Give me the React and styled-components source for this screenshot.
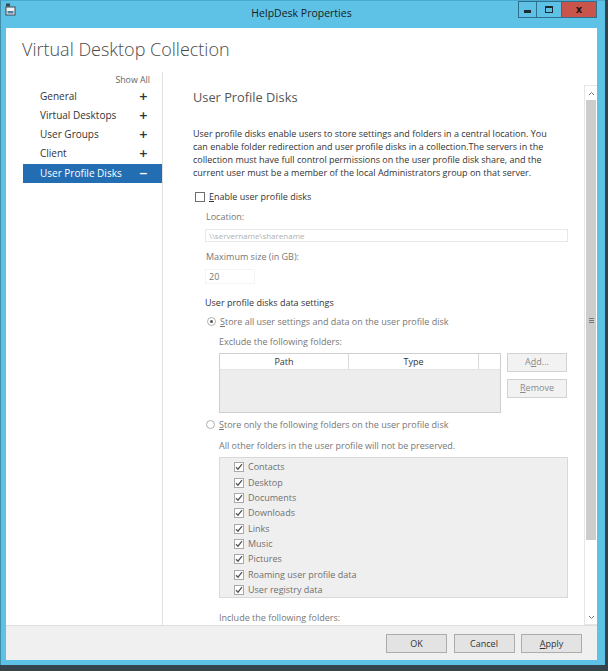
import React from 'react';
import styled, { createGlobalStyle } from 'styled-components';

const GlobalStyle = createGlobalStyle`
  html, body { margin: 0; padding: 0; background: #34434c; }
  body { font-family: "Open Sans", "Noto Sans", sans-serif; color: #333; }
  * { box-sizing: border-box; }
`;

const Shadow = styled.div`
  width: 608px;
  height: 671px;
  background: #34434c;
  padding: 0 3px 6px 0;
`;

const Frame = styled.div`
  height: 100%;
  background: #5ec2e6;
  border-left: 1px solid #3f8cab;
  border-top: 1px solid #4aa9cf;
  display: flex;
  flex-direction: column;
  padding: 0 8px 5px 5px;
`;

const TitleBar = styled.div`
  height: 27px;
  flex: none;
  display: grid;
  grid-template-columns: 1fr auto 1fr;
  align-items: start;
`;

const AppIcon = styled.svg`
  margin: 2px 0 0 -1px;
  display: block;
`;

const TitleText = styled.div`
  font-size: 10.5px;
  line-height: 24px;
  color: #1b1b1b;
`;

const Controls = styled.div`
  justify-self: end;
  display: flex;
  height: 17px;
`;

const CtrlButton = styled.div`
  width: ${p => p.$w}px;
  height: 17px;
  border: 1px solid #2f6f8d;
  border-left-width: ${p => (p.$first ? 1 : 0)}px;
  background: ${p => (p.$close ? '#c9544b' : '#5ec2e6')};
  display: flex;
  align-items: center;
  justify-content: center;
`;

const MinGlyph = styled.div`
  width: 7px;
  height: 3px;
  margin-top: 3px;
  background: #1e2a30;
`;

const MaxGlyph = styled.div`
  width: 8px;
  height: 7px;
  border: 1px solid #1e2a30;
  border-top-width: 2px;
`;

const CloseGlyph = styled.div`
  font-size: 10px;
  font-weight: 700;
  line-height: 10px;
  color: #2a1512;
  font-family: "DejaVu Sans", sans-serif;
`;

const Client = styled.div`
  flex: 1;
  min-height: 0;
  display: flex;
  flex-direction: column;
  background: #fff;
  overflow: hidden;
`;

const Body = styled.div`
  flex: 1;
  min-height: 0;
  display: flex;
  flex-direction: column;
  overflow: hidden;
`;

const PageTitle = styled.h1`
  margin: 0;
  height: 44px;
  flex: none;
  padding: 8px 0 0 16px;
  font-size: 18px;
  line-height: 26px;
  font-weight: 300;
  color: #4a4a4a;
`;

const Columns = styled.div`
  flex: 1;
  min-height: 0;
  display: flex;
`;

const Nav = styled.div`
  width: 157px;
  flex: none;
  padding-left: 17px;
  border-right: 1px solid #e2e2e2;
`;

const ShowAll = styled.div`
  height: 14.5px;
  line-height: 16px;
  text-align: right;
  padding-right: 12px;
  font-size: 8.8px;
  color: #666;
`;

const NavItem = styled.div`
  height: 19.25px;
  line-height: 19.25px;
  display: flex;
  justify-content: space-between;
  padding: 0 14px 0 17px;
  font-size: 10px;
  color: ${p => (p.$active ? '#fff' : '#333')};
  background: ${p => (p.$active ? '#236db3' : 'transparent')};
`;

const NavSign = styled.span`
  font-weight: 700;
  font-size: 11px;
  font-family: "DejaVu Sans", sans-serif;
`;

const Main = styled.div`
  flex: 1;
  min-width: 0;
  display: flex;
`;

const Content = styled.div`
  flex: 1;
  min-width: 0;
  padding: 0 16px 0 30px;
  font-size: 9px;
  line-height: 14px;
`;

const SectionTitle = styled.h2`
  margin: 16px 0 0;
  font-size: 12.8px;
  line-height: 18px;
  font-weight: 400;
  color: #555;
`;

const Para = styled.p`
  margin: 20.5px 0 0;
  line-height: 13px;
  color: #333;
  white-space: nowrap;
`;

const CheckRow = styled.label`
  display: flex;
  align-items: center;
  gap: 4px;
  height: 14px;
  margin: ${p => p.$m || '0'};
  color: ${p => (p.$dim ? '#777' : '#333')};
`;

const Box = styled.span`
  width: 10px;
  height: 10px;
  flex: none;
  border: 1px solid ${p => (p.$dim ? '#a9a9a9' : '#6f6f6f')};
  background: #fff;
  display: flex;
  align-items: center;
  justify-content: center;
`;

const Radio = styled.span`
  width: 9px;
  height: 9px;
  flex: none;
  border-radius: 50%;
  border: 1px solid #b0b0b0;
  background: #fff;
  display: flex;
  align-items: center;
  justify-content: center;
  &::after {
    content: '';
    width: 3px;
    height: 3px;
    border-radius: 50%;
    background: ${p => (p.$on ? '#555' : 'transparent')};
  }
`;

const Label = styled.div`
  height: 14px;
  margin: ${p => p.$m};
  padding-left: ${p => p.$indent || 0}px;
  color: ${p => (p.$dark ? '#333' : '#777')};
`;

const TextInput = styled.div`
  height: ${p => p.$h || 13}px;
  width: ${p => p.$w || 'auto'};
  margin: ${p => p.$m};
  margin-left: 12px;
  border: 1px solid ${p => (p.$faint ? '#f4f4f4' : '#e8e8e8')};
  padding-left: 3px;
  line-height: ${p => (p.$h || 13) - 2}px;
  font-size: ${p => p.$fs || 8}px;
  color: ${p => p.$fg || '#b0b0b0'};
`;

const ExcludeRow = styled.div`
  display: flex;
  align-items: flex-start;
  gap: 6px;
  margin-top: 4px;
  padding-left: 26px;
`;

const Table = styled.div`
  width: 282px;
  height: 60px;
  border: 1px solid #cfcfcf;
  background: #ededed;
  display: flex;
  flex-direction: column;
`;

const TableHead = styled.div`
  height: 16.5px;
  background: #fff;
  display: grid;
  grid-template-columns: 129px 130px 1fr;
  border-bottom: 1px solid #e4e4e4;
`;

const HeadCell = styled.div`
  text-align: center;
  line-height: 15px;
  color: #333;
  border-right: ${p => (p.$last ? 'none' : '1px solid #dadada')};
`;

const SideButtons = styled.div`
  display: flex;
  flex-direction: column;
  gap: 7px;
`;

const Btn = styled.div`
  width: ${p => p.$w || 61}px;
  height: ${p => p.$h || 19}px;
  border: 1px solid ${p => (p.$dim ? '#d2d2d2' : '#acacac')};
  background: ${p => (p.$dim ? '#f2f2f2' : '#e3e3e3')};
  color: ${p => (p.$dim ? '#8a8a8a' : '#333')};
  display: flex;
  align-items: center;
  justify-content: center;
  font-size: ${p => p.$fs || 9}px;
`;

const U = styled.span`
  text-decoration: underline;
`;

const CheckList = styled.div`
  margin: 4.6px 0 0 26px;
  height: 141px;
  border: 1px solid #d9d9d9;
  background: #efefef;
  padding: 1.5px 0 0 14px;
`;

const CheckItem = styled.div`
  height: 15.33px;
  display: flex;
  align-items: center;
  gap: 4px;
  color: #6f6f6f;
`;

const Scrollbar = styled.div`
  width: 13px;
  flex: none;
  margin-top: 13px;
  border: 1px solid #e6e6e6;
  border-right: none;
  background: #fff;
  display: flex;
  flex-direction: column;
`;

const ScrollArrow = styled.div`
  height: 14px;
  flex: none;
  display: flex;
  align-items: center;
  justify-content: center;
`;

const Thumb = styled.div`
  height: 440px;
  flex: none;
  margin: 0 1px;
  background: #cdcdcd;
  display: flex;
  align-items: center;
  justify-content: center;
`;

const Grip = styled.div`
  width: 5px;
  height: 5px;
  border-top: 1px solid #777;
  border-bottom: 1px solid #777;
  &::after {
    content: '';
    display: block;
    margin-top: 1px;
    height: 1px;
    background: #777;
  }
`;

const Track = styled.div`
  flex: 1;
`;

const Footer = styled.div`
  height: 35px;
  flex: none;
  background: #f0f0f0;
  border-top: 1px solid #dedede;
  display: flex;
  justify-content: flex-end;
  align-items: flex-start;
  gap: 6.5px;
  padding: 8px 15px 0 0;
`;

const Check = () => (
  <svg width="8" height="8" viewBox="0 0 8 8">
    <path d="M1 4.2 L3 6.2 L7 1.2" fill="none" stroke="#555" strokeWidth="1.3" />
  </svg>
);

const Chevron = ({ up }) => (
  <svg width="7" height="5" viewBox="0 0 7 5">
    <path d={up ? 'M1 4 L3.5 1.5 L6 4' : 'M1 1 L3.5 3.5 L6 1'} fill="none" stroke="#777" strokeWidth="1" />
  </svg>
);

const navItems = [
  ['General', '+'],
  ['Virtual Desktops', '+'],
  ['User Groups', '+'],
  ['Client', '+'],
  ['User Profile Disks', '−'],
];

const folders = [
  'Contacts', 'Desktop', 'Documents', 'Downloads', 'Links', 'Music', 'Pictures',
  'Roaming user profile data', 'User registry data',
];

export default function App() {
  return (
    <>
      <GlobalStyle />
      <Shadow>
        <Frame>
          <TitleBar>
            <AppIcon width="12" height="13" viewBox="0 0 12 13">
              <rect x="1" y="0.5" width="4" height="3" fill="#3a4a55" />
              <rect x="1" y="4" width="9" height="8" fill="#f2f2f2" stroke="#3a4a55" strokeWidth="1" />
              <rect x="2.5" y="8" width="6" height="2.5" fill="#4a7fa0" />
            </AppIcon>
            <TitleText>HelpDesk Properties</TitleText>
            <Controls>
              <CtrlButton $w={19} $first><MinGlyph /></CtrlButton>
              <CtrlButton $w={25}><MaxGlyph /></CtrlButton>
              <CtrlButton $w={35} $close><CloseGlyph>x</CloseGlyph></CtrlButton>
            </Controls>
          </TitleBar>
          <Client>
            <Body>
              <PageTitle>Virtual Desktop Collection</PageTitle>
              <Columns>
                <Nav>
                  <ShowAll>Show All</ShowAll>
                  {navItems.map(([t, s], i) => (
                    <NavItem key={t} $active={i === 4}>
                      <span>{t}</span>
                      <NavSign>{s}</NavSign>
                    </NavItem>
                  ))}
                </Nav>
                <Main>
                  <Content>
                    <SectionTitle>User Profile Disks</SectionTitle>
                    <Para>
                      User profile disks enable users to store settings and folders in a central location. You<br />
                      can enable folder redirection and user profile disks in a collection.The servers in the<br />
                      collection must have full control permissions on the user profile disk share, and the<br />
                      current user must be a member of the local Administrators group on that server.
                    </Para>
                    <CheckRow $m="11.5px 0 0 2px">
                      <Box />
                      <span><U>E</U>nable user profile disks</span>
                    </CheckRow>
                    <Label $m="5.7px 0 0" $indent={13}>Location:</Label>
                    <TextInput $m="5.3px 0 0">\\servername\sharename</TextInput>
                    <Label $m="7.7px 0 0" $indent={13}>Maximum size (in GB):</Label>
                    <TextInput $m="5.3px 0 0" $h={15} $w="50px" $faint $fs={9} $fg="#777">20</TextInput>
                    <Label $m="12.3px 0 0" $indent={12} $dark>User profile disks data settings</Label>
                    <CheckRow $m="4.4px 0 0 14px" $dim>
                      <Radio $on />
                      <span><U>S</U>tore all user settings and data on the user profile disk</span>
                    </CheckRow>
                    <Label $m="6px 0 0" $indent={26}>Exclude the following folders:</Label>
                    <ExcludeRow>
                      <Table>
                        <TableHead>
                          <HeadCell>Path</HeadCell>
                          <HeadCell>Type</HeadCell>
                          <HeadCell $last />
                        </TableHead>
                      </Table>
                      <SideButtons>
                        <Btn $dim $w={60}>A<U>d</U>d...</Btn>
                        <Btn $dim $w={60}><U>R</U>emove</Btn>
                      </SideButtons>
                    </ExcludeRow>
                    <CheckRow $m="5.3px 0 0 13px" $dim>
                      <Radio />
                      <span><U>S</U>tore only the following folders on the user profile disk</span>
                    </CheckRow>
                    <Label $m="6.7px 0 0" $indent={26}>All other folders in the user profile will not be preserved.</Label>
                    <CheckList>
                      {folders.map(f => (
                        <CheckItem key={f}>
                          <Box $dim><Check /></Box>
                          <span>{f}</span>
                        </CheckItem>
                      ))}
                    </CheckList>
                    <Label $m="13px 0 0" $indent={26}>Include the following folders:</Label>
                  </Content>
                  <Scrollbar>
                    <ScrollArrow><Chevron up /></ScrollArrow>
                    <Thumb><Grip /></Thumb>
                    <Track />
                    <ScrollArrow><Chevron /></ScrollArrow>
                  </Scrollbar>
                </Main>
              </Columns>
            </Body>
            <Footer>
              <Btn>OK</Btn>
              <Btn>Cancel</Btn>
              <Btn><U>A</U>pply</Btn>
            </Footer>
          </Client>
        </Frame>
      </Shadow>
    </>
  );
}
